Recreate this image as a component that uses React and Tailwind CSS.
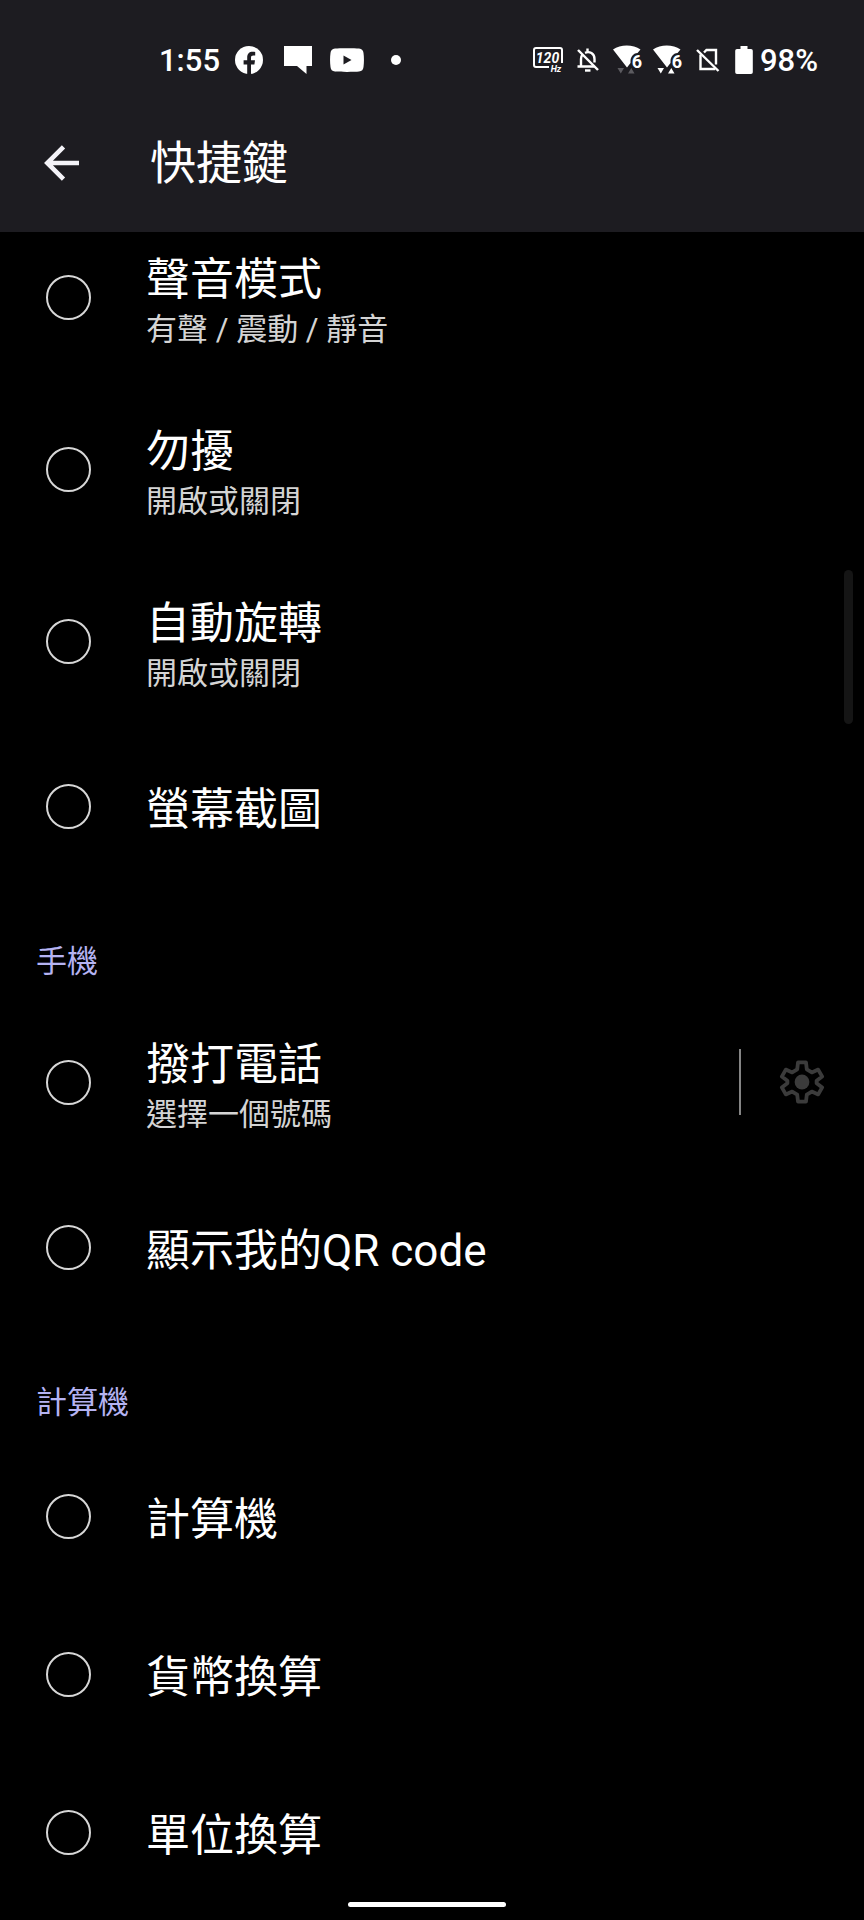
import React from "react";

const FacebookIcon = () => (
  <svg className="w-7 h-7" viewBox="0 0 28 28">
    <circle cx="14" cy="14" r="14" fill="#fff" />
    <path
      d="M12.2 28v-9.6H8.6v-4.1h3.6v-2.9c0-3.7 2.1-5.7 5.4-5.7 1 0 1.9.1 2.6.3v3.4h-1.8c-1.8 0-2.4.9-2.4 2.3v2.6h4l-.6 4.1H16V28z"
      fill="#1d1c21"
    />
  </svg>
);

const ChatIcon = () => (
  <svg className="w-7 h-7" viewBox="0 0 28 28" fill="#fff">
    <path d="M0 0h28v20h-5.5v8L13 20H0z" />
  </svg>
);

const YoutubeIcon = () => (
  <svg className="w-[34px] h-6" viewBox="0 0 34 24">
    <path
      d="M5 .5C9 0 25 0 29 .5c3 .4 4.200 1.900 4.500 4.600.6 4.300.6 9.500 0 13.800-.3 2.700-1.500 4.200-4.500 4.600-4 .5-20 .5-24 0-3-.4-4.200-1.900-4.500-4.600-.6-4.300-.6-9.500 0-13.800C.8 2.400 2 .9 5 .5z"
      fill="#fff"
    />
    <path d="M13.500 7.500v9l8-4.500z" fill="#1d1c21" />
  </svg>
);

const RefreshRateIcon = () => (
  <svg className="w-[30px] h-[26px]" viewBox="0 0 30 26">
    <path d="M16 20H3a2 2 0 0 1-2-2V3a2 2 0 0 1 2-2h24a2 2 0 0 1 2 2v13" fill="none" stroke="#fff" strokeWidth="2" />
    <text x="14.500" y="15.800" textAnchor="middle" fontSize="14" fontWeight="700" fontStyle="italic" fontFamily="Roboto, sans-serif" fill="#fff">120</text>
    <text x="23" y="25" textAnchor="middle" fontSize="9" fontWeight="700" fontStyle="italic" fontFamily="Roboto, sans-serif" fill="#fff">Hz</text>
  </svg>
);

const BellOffIcon = () => (
  <svg className="w-[22px] h-6" viewBox="0 0 22 24" fill="none" stroke="#fff" strokeWidth="2.400">
    <path d="M1 2l20 20" />
    <path d="M4 18.500V11c0-1.800.5-3.300 1.500-4.500M8 4.800C12.500 2.800 17.500 5.500 17.500 11v3.500" />
    <path d="M.5 18.500h17M10.500 3.800V.5" />
    <path d="M8 22.500h5.500" />
  </svg>
);

const WifiIcon = ({ arrows }) => (
  <svg className="w-[30px] h-[30px]" viewBox="0 0 30 30">
    <path d="M0 4.500C7.500-.8 20-.8 27.500 4.500l-3 3.500c-4.500.4-7 4-7 8.500v1.500L14 22.500z" fill="#fff" />
    <text x="23.800" y="22.500" textAnchor="middle" fontSize="18" fontWeight="700" fontFamily="Roboto, sans-serif" fill="#fff">6</text>
    <path d="M4.500 23h6.500l-3.200 5.500zM15 28.500h6.500l-3.200-5.500z" fill={arrows} />
  </svg>
);

const NoSimIcon = () => (
  <svg className="w-6 h-6" viewBox="0 0 24 24" fill="none" stroke="#fff" strokeWidth="2.400">
    <path d="M1 2l21.500 21" />
    <path d="M4.500 6.500V21h14.800M8 4.500L10.500 2H20v14.500" />
  </svg>
);

const BatteryIcon = () => (
  <svg className="w-[18px] h-7" viewBox="0 0 18 28" fill="#fff">
    <path d="M5.500 0h7v3H16a1.800 1.800 0 0 1 1.800 1.800v21.400A1.800 1.800 0 0 1 16 28H2a1.800 1.800 0 0 1-1.800-1.800V4.800A1.800 1.800 0 0 1 2 3h3.500z" />
  </svg>
);

const BackIcon = () => (
  <svg className="w-9 h-9" viewBox="0 0 36 36" fill="none" stroke="#f4f3f8" strokeWidth="4.600">
    <path d="M35 18H3M19.500 1.800L3.300 18l16.200 16.200" />
  </svg>
);

const GearIcon = () => (
  <svg className="w-12 h-12" viewBox="0 0 24 24" fill="none">
    <path
      d="M9.600 5.700L10 2.200h4l.4 3.500 2.500 1.500 3.200-1.400 2 3.500-2.800 2.100v1.200l2.800 2.100-2 3.500-3.200-1.400-2.500 1.500-.4 3.500h-4l-.4-3.500-2.500-1.500-3.200 1.400-2-3.500 2.800-2.100v-1.200L1.900 9.300l2-3.500 3.200 1.400z"
      stroke="#3b3b3b"
      strokeWidth="1.900"
      strokeLinejoin="round"
    />
    <circle cx="12" cy="12" r="3.700" fill="#3b3b3b" />
  </svg>
);

const StatusBar = () => (
  <div className="flex items-center justify-between h-[98px] pt-[22px] pl-[159px] pr-[46px] text-[31px] leading-none font-medium">
    <div className="flex items-center gap-1">
      <span>1:55</span>
      <div className="flex items-center">
        <span className="flex justify-center w-[49px]"><FacebookIcon /></span>
        <span className="flex justify-center w-[49px]"><ChatIcon /></span>
        <span className="flex justify-center w-[49px]"><YoutubeIcon /></span>
        <span className="flex justify-center w-[49px]">
          <span className="w-2.5 h-2.5 rounded-full bg-white"></span>
        </span>
      </div>
    </div>
    <div className="flex items-center">
      <span className="flex justify-center w-10"><RefreshRateIcon /></span>
      <span className="flex justify-center w-10"><BellOffIcon /></span>
      <span className="flex justify-center w-10"><WifiIcon arrows="#5c5b60" /></span>
      <span className="flex justify-center w-10"><WifiIcon arrows="#fff" /></span>
      <span className="flex justify-center w-10"><NoSimIcon /></span>
      <span className="flex justify-center w-8"><BatteryIcon /></span>
      <span>98%</span>
    </div>
  </div>
);

const sections = [
  {
    id: "general",
    items: [
      { id: "sound", title: "聲音模式", description: "有聲 / 震動 / 靜音" },
      { id: "dnd", title: "勿擾", description: "開啟或關閉" },
      { id: "rotate", title: "自動旋轉", description: "開啟或關閉" },
      { id: "screenshot", title: "螢幕截圖" }
    ]
  },
  {
    id: "phone",
    heading: "手機",
    items: [
      { id: "call", title: "撥打電話", description: "選擇一個號碼", hasSettings: true },
      { id: "qr", title: "顯示我的QR code" }
    ]
  },
  {
    id: "calculator",
    heading: "計算機",
    items: [
      { id: "calc", title: "計算機" },
      { id: "currency", title: "貨幣換算" },
      { id: "unit", title: "單位換算" }
    ]
  }
];

const ShortcutRow = ({ item, checked, onSelect }) => (
  <li className={`flex items-center pl-[46px] pr-[38px] ${item.description ? "h-[172px]" : "h-[158px]"}`}>
    <input
      type="radio"
      id={item.id}
      name="shortcut"
      checked={checked}
      onChange={() => onSelect(item.id)}
      className="appearance-none shrink-0 w-[45px] h-[45px] rounded-full border-2 border-[#d6d6d6] checked:border-[12px]"
    />
    <label htmlFor={item.id} className="flex-1 pl-[55px] pt-[7px]">
      <span className="block text-[44px] leading-[58px]">{item.title}</span>
      {item.description && (
        <span className="block text-[31px] leading-[42px] text-[#d4d4d4]">{item.description}</span>
      )}
    </label>
    {item.hasSettings && (
      <div className="flex items-center gap-[37px]">
        <span className="w-0.5 h-[66px] bg-[#858585]"></span>
        <button type="button" aria-label="設定">
          <GearIcon />
        </button>
      </div>
    )}
  </li>
);

const App = () => {
  const [selected, setSelected] = React.useState(null);

  return (
    <div className="relative min-h-screen overflow-hidden bg-black text-white font-[Roboto,'Noto_Sans_CJK_TC',sans-serif]">
      <header className="relative z-10 bg-[#1d1c21]">
        <StatusBar />
        <div className="flex items-center h-[134px] pb-1 pl-11">
          <button type="button" aria-label="返回">
            <BackIcon />
          </button>
          <h1 className="pl-[70px] text-[46px] leading-[60px]">快捷鍵</h1>
        </div>
      </header>

      {/* List is scrolled slightly under the header */}
      <main className="-mt-[21px]">
        {sections.map((section) => (
          <section key={section.id}>
            {section.heading && (
              <h2 className="h-[111px] pt-[55px] pl-9 text-[31px] leading-[44px] text-[#b5b3f2]">
                {section.heading}
              </h2>
            )}
            <ul>
              {section.items.map((item) => (
                <ShortcutRow
                  key={item.id}
                  item={item}
                  checked={selected === item.id}
                  onSelect={setSelected}
                />
              ))}
            </ul>
          </section>
        ))}
      </main>

      {/* Scroll indicator */}
      <div className="absolute top-[570px] right-[11px] w-[9px] h-[154px] rounded-full bg-[#151515]"></div>

      {/* Gesture bar */}
      <div className="fixed bottom-[13px] inset-x-0 flex justify-center">
        <div className="w-[158px] h-[5px] mr-2.5 rounded-full bg-white"></div>
      </div>
    </div>
  );
};

export default App;
